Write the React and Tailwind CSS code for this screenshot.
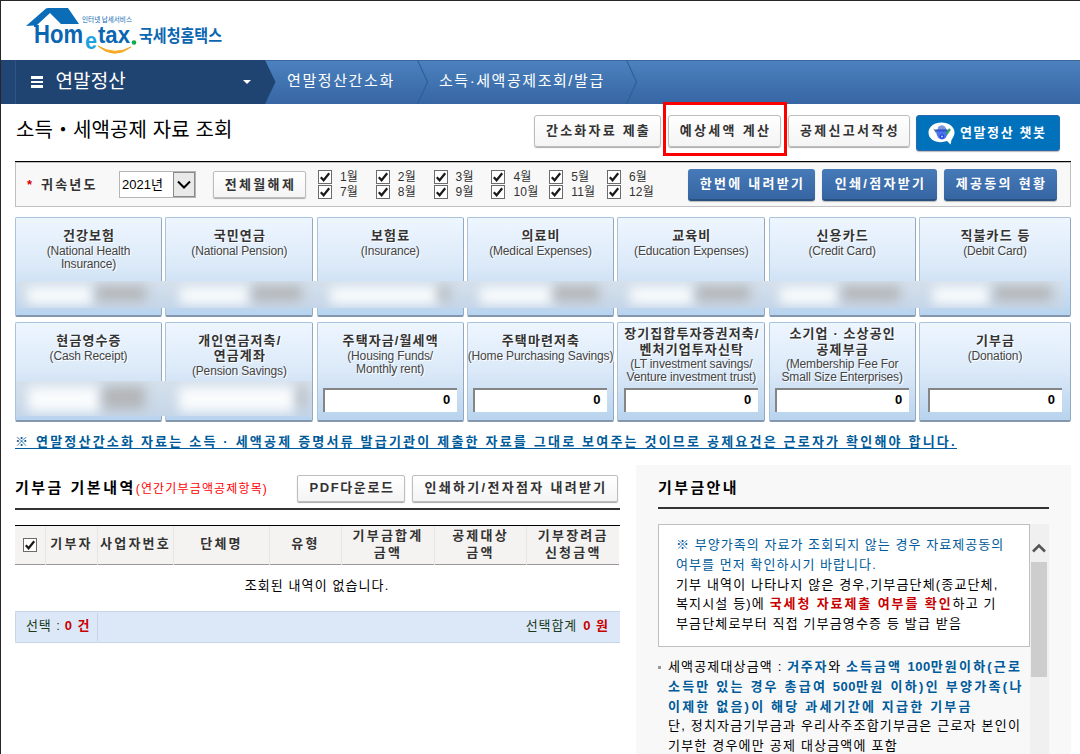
import React from "react";
import clsx from "clsx";

const months = [
  ["1월", "7월"],
  ["2월", "8월"],
  ["3월", "9월"],
  ["4월", "10월"],
  ["5월", "11월"],
  ["6월", "12월"],
];

const firstRow = [
  { title: ["건강보험"], sub: ["(National Health", "Insurance)"] },
  { title: ["국민연금"], sub: ["(National Pension)"] },
  { title: ["보험료"], sub: ["(Insurance)"] },
  { title: ["의료비"], sub: ["(Medical Expenses)"] },
  { title: ["교육비"], sub: ["(Education Expenses)"] },
  { title: ["신용카드"], sub: ["(Credit Card)"] },
  { title: ["직불카드 등"], sub: ["(Debit Card)"] },
];

const secondRow = [
  { title: ["현금영수증"], sub: ["(Cash Receipt)"] },
  { title: ["개인연금저축/", "연금계좌"], sub: ["(Pension Savings)"] },
  { title: ["주택자금/월세액"], sub: ["(Housing Funds/", "Monthly rent)"], value: "0" },
  { title: ["주택마련저축"], sub: ["(Home Purchasing Savings)"], value: "0" },
  {
    title: ["장기집합투자증권저축/", "벤처기업투자신탁"],
    sub: ["(LT investment savings/", "Venture investment trust)"],
    value: "0",
    dense: true,
  },
  {
    title: ["소기업 · 소상공인", "공제부금"],
    sub: ["(Membership Fee For", "Small Size Enterprises)"],
    value: "0",
    dense: true,
  },
  { title: ["기부금"], sub: ["(Donation)"], value: "0" },
];

// Hidden amounts: a light part and a dark part for every card
const firstRowMasks = [
  { light: "left-[9px] w-[66px]", dark: "left-[78px] w-[50px]" },
  { light: "left-[162px] w-[70px]", dark: "left-[234px] w-[50px]" },
  { light: "left-[312px] w-[108px]", dark: "left-[421px] w-[10px]" },
  { light: "left-[462px] w-[74px]", dark: "left-[535px] w-[46px]" },
  { light: "left-[612px] w-[64px]", dark: "left-[678px] w-[54px]" },
  { light: "left-[762px] w-[58px]", dark: "left-[824px] w-[58px]" },
  { light: "left-[915px] w-[56px]", dark: "left-[976px] w-[58px]" },
];

const secondRowMasks = [
  { light: "left-[12px] w-[72px]", dark: "left-[87px] w-[42px]" },
  { light: "left-[163px] w-[116px]", dark: "left-[282px] w-[7px]" },
];

const columns = [
  { label: ["기부자"], width: "w-[52px]" },
  { label: ["사업자번호"], width: "w-[76px]" },
  { label: ["단체명"], width: "w-[96px]" },
  { label: ["유형"], width: "w-[72px]" },
  { label: ["기부금합계", "금액"], width: "w-[93px]" },
  { label: ["공제대상", "금액"], width: "w-[92px]" },
  { label: ["기부장려금", "신청금액"], width: "w-[93px]" },
];

const Logo = () => (
  <svg width="220" height="53" viewBox="0 0 220 53" className="block overflow-visible">
    <path d="M0 19 L20 1.500 Q21 1 22 1 H42 L53 17 H35 L24 6 L11 18 V20 H8 V18.500 Z" fill="#0b6cb8" />
    <g fill="#0b66b2" fontFamily="'Noto Sans CJK KR', sans-serif" fontWeight="700">
      <text x="56" y="15" fontSize="7" fontWeight="400" textLength="50" lengthAdjust="spacingAndGlyphs">
        인터넷 납세서비스
      </text>
      <text x="8" y="36" fontSize="25" fontFamily="'Liberation Sans', sans-serif" textLength="49" lengthAdjust="spacingAndGlyphs">
        Hom
      </text>
      <text x="72" y="36" fontSize="24" fontFamily="'Liberation Sans', sans-serif" textLength="32" lengthAdjust="spacingAndGlyphs">
        tax
      </text>
      <text x="113" y="35" fontSize="17" fontWeight="700" textLength="83" lengthAdjust="spacingAndGlyphs">
        국세청홈택스
      </text>
    </g>
    <text x="59" y="42" fontSize="23" fontWeight="700" fontFamily="'Liberation Sans', sans-serif" fill="#1ba3df" textLength="12" lengthAdjust="spacingAndGlyphs">
      e
    </text>
    <circle cx="108" cy="35.500" r="2.3" fill="#12a84b" />
    <path d="M72 39 Q88 53 105 40 Q89 49 72 39Z" fill="#f6a821" stroke="#f6a821" strokeWidth="1" />
  </svg>
);

const Chevron = () => (
  <svg width="12" height="44" viewBox="0 0 12 44" className="block shrink-0">
    <path d="M0.5 0 L10.500 22 L0.5 44" fill="none" stroke="#2c6099" strokeWidth="1.2" />
  </svg>
);

const Check = () => (
  <svg width="14" height="14" viewBox="0 0 14 14" className="block shrink-0">
    <rect x="0.5" y="0.5" width="13" height="13" fill="#fff" stroke="#6b6b6b" />
    <path d="M2.8 7.2 L5.6 10.3 L11.2 3.2" fill="none" stroke="#1a1a1a" strokeWidth="2.2" />
  </svg>
);

const ChatIcon = () => (
  <svg width="27" height="24" viewBox="0 0 27 24" className="block shrink-0">
    <path d="M13.500 1.500 C20.500 1.500 26.500 5.500 26.500 11.500 C26.500 15 24.500 17 23.500 19 L22.500 23.500 L19 20 C11 23 0.500 20 0.500 11.500 C0.500 5.500 6.500 1.500 13.500 1.500Z" fill="#fff" />
    <path d="M5 7.500 L9 9.500 L8.500 13 Z" fill="#5f8fb5" />
    <ellipse cx="14" cy="12" rx="5.500" ry="6.500" fill="#4a74ee" />
    <path d="M10 6 Q14 2.500 17.500 6 L17 8.500 H10.500Z" fill="#7d96d8" />
    <rect x="7" y="8.500" width="13" height="2" rx="1" fill="#2f55c8" />
    <path d="M18.500 13 L22 8" stroke="#34a05a" strokeWidth="2.200" />
    <circle cx="14" cy="15.500" r="2.300" fill="#2445d5" />
    <circle cx="14" cy="15.500" r="1" fill="#b9d3ff" />
  </svg>
);

const GrayButton = ({ className, children }) => (
  <button
    className={clsx(
      "flex shrink-0 items-center justify-center whitespace-nowrap border border-[#bdbdbd] bg-linear-to-b from-white to-[#f4f4f4] pl-[2px] text-[13px] font-bold text-[#333] shadow-[0_1px_1px_#aaa]",
      className
    )}
  >
    {children}
  </button>
);

const BlueButton = ({ className, children }) => (
  <button
    className={clsx(
      "flex h-[32px] shrink-0 items-center justify-center rounded-[3px] border-b-2 border-[#29507f] bg-linear-to-b from-[#477ab8] to-[#3665a3] pl-[2px] text-[13px] font-bold tracking-[2.3px] whitespace-nowrap text-white shadow-[0_1px_1px_#bbb]",
      className
    )}
  >
    {children}
  </button>
);

const DeductionCard = ({ item }) => (
  <div
    className={clsx(
      "flex h-[100px] flex-col items-center rounded-[2px] border border-[#a9c3dc] border-r-[#94a9c0] border-b-2 border-b-[#8397ae] bg-linear-to-b from-[#eef6ff] via-[#dbe9f8] to-[#b8d3ee] whitespace-nowrap [text-shadow:1px_1px_0_#fff]",
      item.dense ? "pt-[3px]" : "pt-[10px]"
    )}
  >
    {item.title.map((line) => (
      <div
        key={line}
        className={clsx("pl-px text-[13px] font-bold tracking-[1.1px] text-[#333]", item.dense ? "leading-[16px]" : "leading-[15px]")}
      >
        {line}
      </div>
    ))}
    <div className={clsx("text-center text-[12px] leading-[13px] tracking-[-0.15px] text-[#444]", !item.dense && "mt-[2px]")}>
      {item.sub.map((line) => (
        <div key={line}>{line}</div>
      ))}
    </div>
    {item.value && (
      <div className="mt-auto mb-[8px] flex h-[24px] w-[134px] items-center justify-end border-t-2 border-l-2 border-[#858585] bg-white pr-[7px] pb-[2px] text-[13px] font-bold text-black">
        {item.value}
      </div>
    )}
  </div>
);

const MaskStrip = ({ masks, className }) => (
  <div className={clsx("absolute overflow-hidden bg-linear-to-b from-[#d5e0eb] to-[#c5d6e9]", className)}>
    {masks.map((mask) => (
      <React.Fragment key={mask.light}>
        <div className={clsx("absolute top-[6px] bottom-[4px] bg-[#fafcfd] blur-[6px]", mask.light)} />
        <div className={clsx("absolute top-[5px] bottom-[7px] bg-[#b4b6b8] blur-[6px]", mask.dark)} />
      </React.Fragment>
    ))}
  </div>
);

const cardGrid = "grid grid-cols-[147px_148px_147px_147px_148px_147px_152px] justify-between";

const App = () => {
  return (
    <div className="flex h-[754px] w-[1080px] flex-col overflow-hidden border-t border-l border-[#2a2526] bg-white font-['Liberation_Sans','Noto_Sans_CJK_KR',sans-serif] text-black">
      <header className="h-[59px] shrink-0 pt-[6px] pl-[25px]">
        <Logo />
      </header>

      {/* Breadcrumb bar */}
      <nav className="flex h-[44px] shrink-0 items-center bg-linear-to-b from-[#4b82bf] to-[#3766a3] text-white shadow-[inset_0_1px_0_#3b6498]">
        <div className="h-full w-[15px] border-r border-[#2c5587] bg-[#214674]" />
        <div className="flex h-full w-[249px] items-center bg-[#204472] pr-[13px] pl-[15px]">
          <div className="flex w-[12px] flex-col gap-[2px]">
            <span className="h-[2.5px] bg-white" />
            <span className="h-[2.5px] bg-white" />
            <span className="h-[2.5px] bg-white" />
          </div>
          <span className="ml-[12.5px] pb-[2px] text-[19px] leading-none tracking-[0.1px]">연말정산</span>
          <svg width="10" height="6" viewBox="0 0 10 6" className="ml-auto">
            <path d="M1 1 H9 L5 5Z" fill="#fff" />
          </svg>
        </div>
        <svg width="11" height="44" viewBox="0 0 11 44" className="block shrink-0">
          <path d="M0 0 L10.500 22 L0 44Z" fill="#204472" />
        </svg>
        <span className="ml-[11px] w-[130px] pb-[2px] text-[15px] tracking-[1.6px] whitespace-nowrap">연말정산간소화</span>
        <Chevron />
        <span className="ml-[10px] w-[187px] pb-[2px] text-[15px] tracking-[1.55px] whitespace-nowrap">소득·세액공제조회/발급</span>
        <Chevron />
      </nav>

      {/* Title and page actions */}
      <div className="flex h-[57px] shrink-0 items-start pt-[11px] pr-[20px] pl-[15px]">
        <h1 className="mt-[1px] text-[20px] leading-[28px] tracking-[0.1px] whitespace-nowrap">소득・세액공제 자료 조회</h1>
        <div className="ml-auto flex">
          <GrayButton className="h-[32px] w-[127px] rounded-[3px] tracking-[2.2px]">간소화자료 제출</GrayButton>
          <div className="relative ml-[7px]">
            <GrayButton className="h-[32px] w-[113px] rounded-[3px] tracking-[2.3px]">예상세액 계산</GrayButton>
            <div className="absolute -top-[13px] -left-[5px] h-[54px] w-[124px] border-3 border-[#fb0000]" />
          </div>
          <GrayButton className="ml-[7px] h-[32px] w-[122px] rounded-[3px] tracking-[2.3px]">공제신고서작성</GrayButton>
          <button className="ml-[6px] flex h-[36px] w-[144px] items-center rounded-[3px] border border-[#2b69ae] bg-[#0072bc] pl-[11px] text-[13px] font-bold tracking-[1.6px] whitespace-nowrap text-white shadow-[0_1px_1px_#bbb]">
            <ChatIcon />
            <span className="ml-[5px]">연말정산 챗봇</span>
          </button>
        </div>
      </div>

      <main className="w-[1070px] pl-[14px]">
        {/* Filter bar */}
        <div className="h-[46px] border-t border-black">
          <div className="flex h-[45px] items-center border border-[#bfbfbf] bg-[#f8f8f8] pl-[11px]">
            <span className="w-[14px] text-[13px] font-bold text-[#d40000]">*</span>
            <span className="w-[78px] text-[13px] font-bold tracking-[2.2px] text-[#333]">귀속년도</span>
            <div className="flex h-[27px] w-[77px] items-center border border-[#b5b5b5] bg-white pl-[2px] text-[13px]">
              2021년
              <div className="ml-auto flex h-[25px] w-[22px] items-center justify-center border border-[#8a8a8a] bg-[#e9e9e9]">
                <svg width="14" height="9" viewBox="0 0 14 9">
                  <path d="M1 1.500 L7 7.500 L13 1.500" fill="none" stroke="#000" strokeWidth="2" />
                </svg>
              </div>
            </div>
            <GrayButton className="ml-[17px] h-[27px] w-[93px] rounded-[2px] tracking-[2.3px]">전체월해제</GrayButton>
            <div className="ml-[12px] grid w-[370px] grid-cols-[repeat(6,57.8px)] text-[12px] text-[#333]">
              {months.map((pair) => (
                <div key={pair[0]} className="flex flex-col gap-px">
                  {pair.map((month) => (
                    <label key={month} className="flex h-[14.500px] items-center gap-[8px] tracking-[0.2px] whitespace-nowrap">
                      <Check />
                      {month}
                    </label>
                  ))}
                </div>
              ))}
            </div>
            <BlueButton className="w-[127px]">한번에 내려받기</BlueButton>
            <BlueButton className="ml-[7px] w-[115px]">인쇄/점자받기</BlueButton>
            <BlueButton className="ml-[7px] w-[113px]">제공동의 현황</BlueButton>
          </div>
        </div>

        {/* Deduction item cards */}
        <div className="relative mt-[10px] flex flex-col gap-[5px]">
          <div className={cardGrid}>
            {firstRow.map((item) => (
              <DeductionCard key={item.title[0]} item={item} />
            ))}
          </div>
          <div className={cardGrid}>
            {secondRow.map((item) => (
              <DeductionCard key={item.title[0]} item={item} />
            ))}
          </div>
          <MaskStrip masks={firstRowMasks} className="top-[64px] left-[3px] h-[27px] w-[1046px]" />
          <MaskStrip masks={secondRowMasks} className="top-[164px] left-px h-[35px] w-[296px]" />
        </div>

        <p className="mt-[11px] h-[32px] text-[13px] leading-[18px] font-bold tracking-[2.2px] whitespace-nowrap text-[#005b9a]">
          <span className="inline-block h-[16px] border-b border-[#005b9a]">
            ※ 연말정산간소화 자료는 소득 · 세액공제 증명서류 발급기관이 제출한 자료를 그대로 보여주는 것이므로 공제요건은 근로자가 확인해야 합니다.
          </span>
        </p>

        <div className="flex justify-between">
          {/* Donation list */}
          <section className="w-[605px]">
            <div className="flex h-[45px] items-center border-b-2 border-[#333]">
              <h2 className="mt-[3px] text-[15px] font-bold tracking-[2.5px] whitespace-nowrap">기부금 기본내역</h2>
              <span className="mt-[5px] text-[12px] tracking-[1.15px] whitespace-nowrap text-[#f00]">(연간기부금액공제항목)</span>
              <GrayButton className="mt-[3px] ml-auto h-[27px] w-[108px] rounded-[2px] tracking-[1.6px]">PDF다운로드</GrayButton>
              <GrayButton className="mt-[3px] mr-[2px] ml-[7px] h-[27px] w-[206px] rounded-[2px] tracking-[2.3px]">
                인쇄하기/전자점자 내려받기
              </GrayButton>
            </div>

            <div className="mt-[15px] border-t border-black">
              <table className="w-[604px] table-fixed border-collapse">
                <thead>
                  <tr className="h-[38px] border-b border-[#999] bg-[#f5f3f2]">
                    <th className="w-[30px] pl-[8px]">
                      <Check />
                    </th>
                    {columns.map((col) => (
                      <th
                        key={col.label[0]}
                        className={clsx(
                          "border-l border-[#e6e6e6] p-0 pb-[2px] pl-px text-[13px] leading-[17px] font-bold tracking-[2.2px] whitespace-nowrap text-[#333]",
                          col.width
                        )}
                      >
                        {col.label.map((line) => (
                          <div key={line}>{line}</div>
                        ))}
                      </th>
                    ))}
                  </tr>
                </thead>
                <tbody>
                  <tr className="h-[47px]">
                    <td colSpan={8} className="pb-[5px] text-center text-[13px] tracking-[1.1px]">
                      조회된 내역이 없습니다.
                    </td>
                  </tr>
                </tbody>
              </table>
            </div>

            <div className="flex h-[32px] items-center border-t border-b border-[#c5d6e9] bg-[#dce8f8] pb-[2px] text-[13px] tracking-[0.9px] text-[#1a3a1a]">
              <div className="-mb-[2px] flex h-full w-[83px] items-center border-r border-l border-[#c5d6e9] pb-[2px] pl-[10px] whitespace-nowrap">
                선택 :<b className="ml-[4px] tracking-[1px] text-[#c80000]">0 건</b>
              </div>
              <div className="ml-auto pr-[11px]">
                선택합계<b className="ml-[6px] tracking-[1px] text-[#c80000]">0 원</b>
              </div>
            </div>
          </section>

          {/* Guide panel */}
          <aside className="h-[289px] w-[435px] bg-[#f8f8f8] pr-[22px] pl-[22px]">
            <h2 className="h-[44px] border-b-2 border-[#333] pt-[11px] text-[15px] leading-[24px] font-bold tracking-[2.4px]">기부금안내</h2>
            <div className="mt-[15px] flex h-[230px] justify-between">
              <div className="w-[372px] text-[13px] leading-[19.800px] tracking-[1.15px] whitespace-nowrap">
                <div className="h-[123px] border border-[#bfbfbf] bg-white pt-[10px] pl-[17px]">
                  <div className="tracking-[1.05px] text-[#005b9a]">
                    ※ 부양가족의 자료가 조회되지 않는 경우 자료제공동의
                    <br />
                    여부를 먼저 확인하시기 바랍니다.
                  </div>
                  기부 내역이 나타나지 않은 경우,기부금단체(종교단체,
                  <br />
                  복지시설 등)에 <b className="tracking-[1.9px] text-[#c80000]">국세청 자료제출 여부를 확인</b>하고 기
                  <br />
                  부금단체로부터 직접 기부금영수증 등 발급 받음
                </div>
                <div className="mt-[10px] flex">
                  <span className="mt-[9px] mr-[7px] h-[3px] w-[3px] bg-[#999]" />
                  <div>
                    세액공제대상금액 : <b className="tracking-[1.7px] text-[#005b9a]">거주자</b>와{" "}
                    <b className="text-[#005b9a]">
                      <span className="tracking-[2px]">소득금액 </span>
                      <span className="tracking-[0.5px]">100</span>
                      <span className="tracking-[2.2px]">만원이하(근로</span>
                      <br />
                      <span className="tracking-[2.2px]">소득만 있는 경우 총급여 </span>
                      <span className="tracking-[0.5px]">500</span>
                      <span className="tracking-[2.3px]">만원 이하)인 부양가족(나</span>
                      <br />
                      <span className="tracking-[2.2px]">이제한 없음)이 해당 과세기간에 지급한 기부금</span>
                    </b>
                    <br />
                    <span className="tracking-[1.2px]">
                      단, 정치자금기부금과 우리사주조합기부금은 근로자 본인이
                      <br />
                      기부한 경우에만 공제 대상금액에 포함
                    </span>
                  </div>
                </div>
              </div>
              <div className="flex w-[19px] flex-col bg-[#f0f0f0] pt-[19px]">
                <svg width="14" height="10" viewBox="0 0 14 10" className="ml-[2px]">
                  <path d="M1 8.500 L7 2.500 L13 8.500" fill="none" stroke="#555" strokeWidth="2.600" />
                </svg>
                <div className="mt-[9px] ml-px h-[115px] w-[16px] bg-[#cdcdcd]" />
              </div>
            </div>
          </aside>
        </div>
      </main>
    </div>
  );
};

export default App;
